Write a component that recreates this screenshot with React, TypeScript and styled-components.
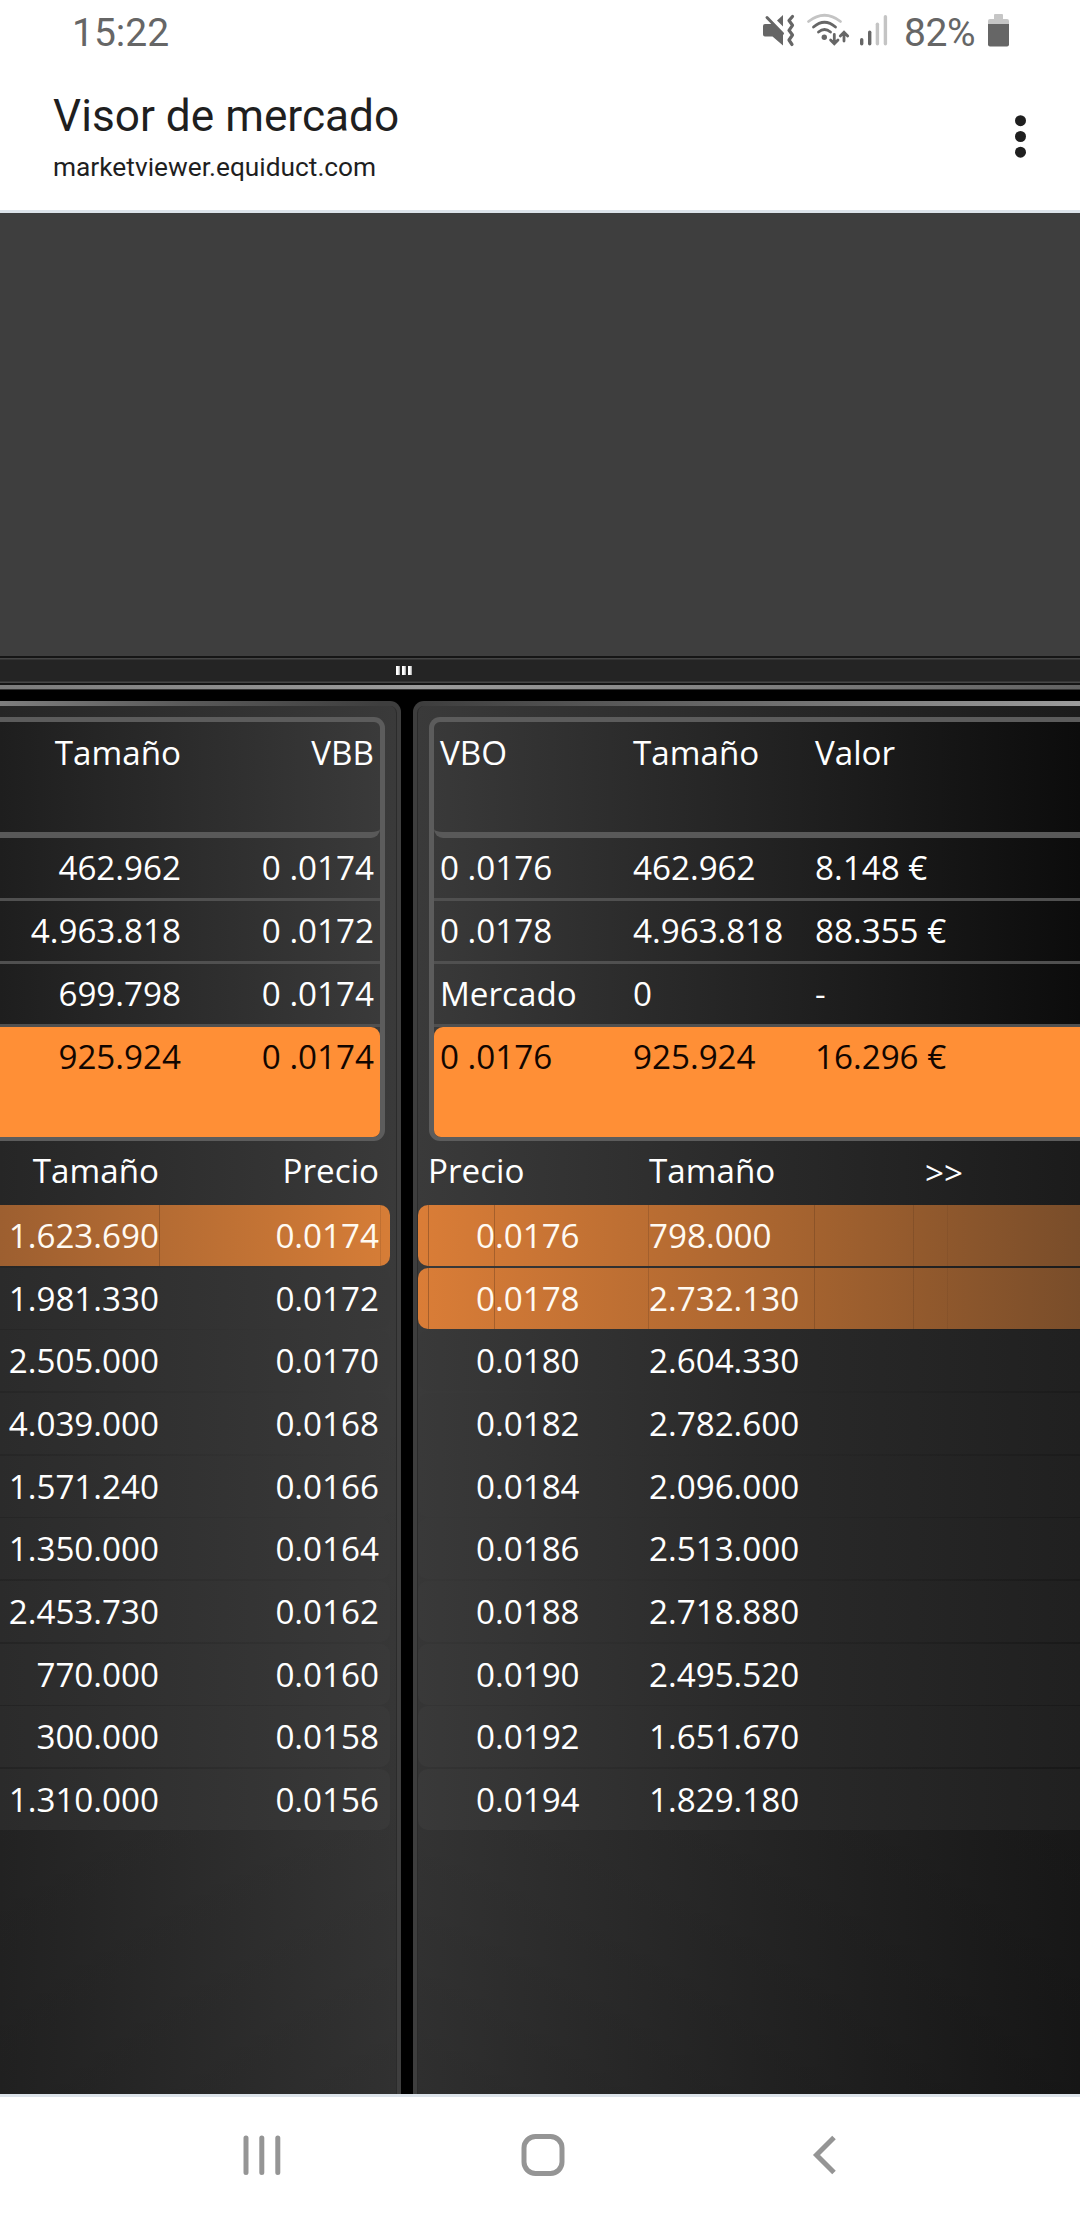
import {FC} from 'react'
import styled, {createGlobalStyle, css} from 'styled-components'

const GlobalStyle = createGlobalStyle`
  body {
    margin: 0;
    background: #fff;
  }
  * {
    box-sizing: border-box;
  }
`

type Side = 'bid' | 'ask'

const Screen = styled.div`
  width: 1080px;
  height: 2220px;
  display: flex;
  flex-direction: column;
  overflow: hidden;
  font-family: 'Open Sans', 'Noto Sans', sans-serif;
`

const StatusBar = styled.div`
  height: 64px;
  padding: 0 71px 0 72px;
  display: flex;
  justify-content: space-between;
  font-family: Roboto, sans-serif;
  font-size: 39px;
  line-height: 66px;
  color: #666;
`
const StatusIcons = styled.div`
  display: flex;
`
const BatteryLevel = styled.span`
  width: 84px;
  letter-spacing: -0.4px;
`

const TitleBar = styled.div`
  height: 149px;
  padding: 26px 52px 0 53px;
  display: flex;
  justify-content: space-between;
  border-bottom: 3px solid #dce3ea;
  font-family: Roboto, sans-serif;
  color: #1f1f1f;
`
const PageTitle = styled.div`
  font-size: 44.2px;
  line-height: 52px;
`
const PageHost = styled.div`
  font-size: 26.3px;
  line-height: 32px;
  margin-top: 9px;
`

const ChartArea = styled.div`
  height: 443px;
  background: #3e3e3e;
`
const Splitter = styled.div`
  height: 29px;
  padding-left: 396px;
  display: flex;
  align-items: center;
  gap: 2px;
  border-top: 2px solid #151515;
  border-bottom: 2px solid #151515;
  background: linear-gradient(#444 1px, #242424 2px, #242424 23px, #484848 24px, #484848);
`
const Grip = styled.i`
  width: 4px;
  height: 9px;
  margin-top: -1px;
  background: linear-gradient(90deg, #fff 50%, #999);
`
const SplitterEdge = styled.div`
  height: 5px;
  background: linear-gradient(90deg, #7c7c7c, #9c9c9c 420px, #858585 700px, #626262);
  border-bottom: 1px solid #333;
`

const Book = styled.div`
  flex: 1;
  min-height: 0;
  padding-top: 11px;
  display: flex;
  gap: 12px;
  background: #000;
`

// The frame is the gradient that shows round the panel body
const PanelFrame = styled.div<{ $side: Side }>`
  display: flex;
  ${p =>
    p.$side === 'bid'
      ? css`
          width: 401px;
          padding: 5px 4px 0 0;
          border-radius: 0 11px 0 0;
          background: linear-gradient(90deg, #7e7e7e, #5a5a5a 180px, #3e3e3e 380px);
        `
      : css`
          flex: 1;
          padding: 5px 0 0 4px;
          border-radius: 11px 0 0 0;
          background: linear-gradient(90deg, #3e3e3e 10px, #666 300px, #9b9b9b);
        `}
`
const PanelBody = styled.div<{ $side: Side }>`
  flex: 1;
  min-width: 0;
  padding-top: 11px;
  ${p =>
    p.$side === 'bid'
      ? css`
          border-right: 1px solid #2b2b2b;
          border-radius: 0 7px 0 0;
          background: linear-gradient(rgba(0, 0, 0, 0) 50%, rgba(0, 0, 0, 0.16)),
            linear-gradient(90deg, #262626, #3a3a3a);
        `
      : css`
          border-left: 1px solid #2b2b2b;
          border-radius: 7px 0 0 0;
          background: linear-gradient(rgba(0, 0, 0, 0) 50%, rgba(0, 0, 0, 0.2)),
            linear-gradient(90deg, #3a3a3a, #2a2a2a 50%, #1b1b1b);
        `}
`

const Summary = styled.div<{ $side: Side }>`
  height: 424px;
  border: 0 solid #5c5c5c;
  ${p =>
    p.$side === 'bid'
      ? css`
          width: 385px;
          border-width: 5px 5px 4px 0;
          border-radius: 0 11px 11px 0;
          background: linear-gradient(90deg, #1e1e1e, #3a3a3a);
        `
      : css`
          margin-left: 11px;
          border-width: 5px 0 4px 5px;
          border-radius: 11px 0 0 11px;
          background: linear-gradient(90deg, #393939, #232323 50%, #0c0c0c);
        `}
`
const summaryColumns = {
  bid: '187px 193px',
  ask: '193px 182px 1fr'
}
const SummaryLine = styled.div<{ $side: Side; $kind: 'head' | 'line' | 'total' }>`
  display: grid;
  grid-template-columns: ${p => summaryColumns[p.$side]};
  font-size: 33.2px;
  line-height: 60px;
  color: #fff;
  text-align: ${p => (p.$side === 'bid' ? 'right' : 'left')};
  ${p =>
    p.$kind === 'head' &&
    css`
      height: 116px;
      border-bottom: 6px solid #595959;
      border-radius: ${p.$side === 'bid' ? '0 0 9px 0' : '0 0 0 9px'};
      line-height: 62px;
    `}
  ${p =>
    p.$kind === 'line' &&
    css`
      height: 63px;
      border-bottom: 3px solid #505050;
    `}
  ${p =>
    p.$kind === 'total' &&
    css`
      height: 110px;
      border-radius: ${p.$side === 'bid' ? '0 9px 7px 0' : '9px 0 0 7px'};
      background: #ff8f36;
      color: #120600;
    `}
`
const SummaryCell = styled.span`
  padding: 0 6px 0 6px;
  white-space: pre;
`

const depthColumns = {
  bid: '160px 220px',
  ask: '231px 166px 1fr'
}
const DepthHead = styled.div<{ $side: Side }>`
  height: 64px;
  display: grid;
  grid-template-columns: ${p => depthColumns[p.$side]};
  font-size: 33.2px;
  line-height: 60px;
  color: #fff;
  text-align: ${p => (p.$side === 'bid' ? 'right' : 'left')};
`
const DepthHeadCell = styled.span<{ $indent?: number }>`
  padding: 0 1px 0 ${p => p.$indent || 0}px;
`
const DepthMore = styled.span`
  padding: 2px 0 0 110px;
`

// Thin seams where the highlighted cells meet
const seam = (x: number, alpha: number) =>
  `linear-gradient(rgba(70, 40, 20, ${alpha}), rgba(70, 40, 20, ${alpha})) ${x}px 0 / 1px 100% no-repeat`
const hotBackground = {
  bid: [seam(159, 0.3), seam(380, 0.15), 'linear-gradient(90deg, #9d5f30, #d67d37)'].join(', '),
  ask: [
    seam(10, 0.35),
    seam(76, 0.3),
    seam(230, 0.2),
    seam(396, 0.25),
    seam(495, 0.2),
    seam(529, 0.1),
    'linear-gradient(90deg, #da7d37, #a3622f 60%, #794d2a)'
  ].join(', ')
}
const DepthRow = styled.div<{ $side: Side; $hot?: boolean }>`
  height: 61px;
  margin-bottom: 1.67px;
  display: grid;
  grid-template-columns: ${p => depthColumns[p.$side]};
  font-size: 33.2px;
  line-height: 61.5px;
  color: ${p => (p.$hot ? '#fffaf2' : '#fff')};
  text-align: ${p => (p.$side === 'bid' ? 'right' : 'left')};
  ${p =>
    p.$side === 'bid'
      ? css`
          width: 390px;
          border-radius: 0 10px 10px 0;
          background: ${p.$hot ? hotBackground.bid : 'linear-gradient(90deg, #2b2b2b, #393939)'};
        `
      : css`
          border-radius: 10px 0 0 10px;
          background: ${p.$hot ? hotBackground.ask : 'linear-gradient(90deg, #393939, #2a2a2a 50%, #202020)'};
        `}
`
const DepthCell = styled.span<{ $indent?: number }>`
  padding: 0 1px 0 ${p => p.$indent || 0}px;
`

const NavBar = styled.div`
  height: 126px;
  border-top: 3px solid #dce3ea;
  background: #fff;
`

const StatusGlyphs: FC = () => (
  <svg width="144" height="64" viewBox="760 0 144 64" fill="#666">
    <path d="M765 24h8l10 9.500V45.500L772.500 36.500H765a2 2 0 0 1-2-2V26a2 2 0 0 1 2-2z" />
    <path d="M783 15v11.500l-6-6z" />
    <path d="M767 17.500l15.500 16" stroke="#666" strokeWidth="3" strokeLinecap="round" />
    <path
      d="M792.500 16.500l-3.500 4 3.500 4.800-3.500 5 3.500 4.700-3.500 5 3 4.500"
      fill="none"
      stroke="#666"
      strokeWidth="3.200"
      strokeLinejoin="round"
      strokeLinecap="round"
    />
    <g fill="none" strokeWidth="2.800" strokeLinecap="round">
      <path d="M808.500 21.500q16-12.500 32 0" stroke="#c4c4c4" />
      <path d="M813.500 27q11-9.500 22 0" stroke="#666" />
      <path d="M818.500 32q6-5 12 0" stroke="#666" />
    </g>
    <circle cx="824.300" cy="37.300" r="2.700" />
    <path
      d="M834.300 34.500v9m-3.700-3.500l3.700 3.800 3.700-3.800M844 41V32.500m-3.700 3.500l3.700-3.800 3.700 3.800"
      fill="none"
      stroke="#666"
      strokeWidth="2.800"
      strokeLinecap="round"
    />
    <rect x="860" y="38" width="3.400" height="7.500" rx="1.700" />
    <rect x="868" y="30.500" width="3.400" height="15" rx="1.700" />
    <rect x="875.700" y="22.500" width="3.400" height="23" rx="1.700" fill="#c4c4c4" />
    <rect x="883.700" y="15" width="3.400" height="30.500" rx="1.700" fill="#c4c4c4" />
  </svg>
)

const BatteryGlyph: FC = () => (
  <svg width="21" height="64" viewBox="0 0 21 64">
    <path d="M7 14h7a1 1 0 0 1 1 1v4h4a2 2 0 0 1 2 2v3H0v-3a2 2 0 0 1 2-2h4v-4a1 1 0 0 1 1-1z" fill="#c6c6c6" />
    <path d="M0 24h21v20.500a2 2 0 0 1-2 2H2a2 2 0 0 1-2-2z" fill="#666" />
  </svg>
)

const MoreGlyph: FC = () => (
  <svg width="15" height="90" viewBox="0 0 15 90" fill="#1f1f1f">
    <circle cx="7.500" cy="30.700" r="5.500" />
    <circle cx="7.500" cy="46.500" r="5.500" />
    <circle cx="7.500" cy="62.200" r="5.500" />
  </svg>
)

const NavGlyphs: FC = () => (
  <svg width="1080" height="123" viewBox="0 2097 1080 123" fill="none" stroke="#959595" strokeWidth="5" strokeLinecap="round">
    <path d="M246 2138v34.500M261.800 2138v34.500M277.800 2138v34.500" />
    <rect x="524" y="2136.500" width="38" height="37" rx="11.500" />
    <path d="M834 2137.500l-17.500 17.500 17.500 17.500" strokeLinecap="butt" />
  </svg>
)

const summaries: Record<Side, string[][]> = {
  bid: [
    ['Tamaño', 'VBB'],
    ['462.962', '0 .0174'],
    ['4.963.818', '0 .0172'],
    ['699.798', '0 .0174'],
    ['925.924', '0 .0174']
  ],
  ask: [
    ['VBO', 'Tamaño', 'Valor'],
    ['0 .0176', '462.962', '8.148 €'],
    ['0 .0178', '4.963.818', '88.355 €'],
    ['Mercado', '0', '-'],
    ['0 .0176', '925.924', '16.296 €']
  ]
}

const bids = [
  ['1.623.690', '0.0174'],
  ['1.981.330', '0.0172'],
  ['2.505.000', '0.0170'],
  ['4.039.000', '0.0168'],
  ['1.571.240', '0.0166'],
  ['1.350.000', '0.0164'],
  ['2.453.730', '0.0162'],
  ['770.000', '0.0160'],
  ['300.000', '0.0158'],
  ['1.310.000', '0.0156']
]
const asks = [
  ['0.0176', '798.000'],
  ['0.0178', '2.732.130'],
  ['0.0180', '2.604.330'],
  ['0.0182', '2.782.600'],
  ['0.0184', '2.096.000'],
  ['0.0186', '2.513.000'],
  ['0.0188', '2.718.880'],
  ['0.0190', '2.495.520'],
  ['0.0192', '1.651.670'],
  ['0.0194', '1.829.180']
]

const lineKind = (i: number, last: number) => (i === 0 ? 'head' : i === last ? 'total' : 'line')

const SummaryTable: FC<{ side: Side }> = ({ side }) => {
  const rows = summaries[side]
  return (
    <Summary $side={side}>
      {rows.map((cells, i) => (
        <SummaryLine key={i} $side={side} $kind={lineKind(i, rows.length - 1)}>
          {cells.map((text, j) => (
            <SummaryCell key={j}>{text}</SummaryCell>
          ))}
        </SummaryLine>
      ))}
    </Summary>
  )
}

export default function App() {
  return (
    <Screen>
      <GlobalStyle />
      <StatusBar>
        <span>15:22</span>
        <StatusIcons>
          <StatusGlyphs />
          <BatteryLevel>82%</BatteryLevel>
          <BatteryGlyph />
        </StatusIcons>
      </StatusBar>
      <TitleBar>
        <div>
          <PageTitle>Visor de mercado</PageTitle>
          <PageHost>marketviewer.equiduct.com</PageHost>
        </div>
        <MoreGlyph />
      </TitleBar>
      <ChartArea />
      <Splitter>
        <Grip />
        <Grip />
        <Grip />
      </Splitter>
      <SplitterEdge />
      <Book>
        <PanelFrame $side="bid">
          <PanelBody $side="bid">
            <SummaryTable side="bid" />
            <DepthHead $side="bid">
              <DepthHeadCell>Tamaño</DepthHeadCell>
              <DepthHeadCell>Precio</DepthHeadCell>
            </DepthHead>
            {bids.map(([size, price], i) => (
              <DepthRow key={price} $side="bid" $hot={i === 0}>
                <DepthCell>{size}</DepthCell>
                <DepthCell>{price}</DepthCell>
              </DepthRow>
            ))}
          </PanelBody>
        </PanelFrame>
        <PanelFrame $side="ask">
          <PanelBody $side="ask">
            <SummaryTable side="ask" />
            <DepthHead $side="ask">
              <DepthHeadCell $indent={10}>Precio</DepthHeadCell>
              <DepthHeadCell>Tamaño</DepthHeadCell>
              <DepthMore>&gt;&gt;</DepthMore>
            </DepthHead>
            {asks.map(([price, size], i) => (
              <DepthRow key={price} $side="ask" $hot={i < 2}>
                <DepthCell $indent={58}>{price}</DepthCell>
                <DepthCell>{size}</DepthCell>
              </DepthRow>
            ))}
          </PanelBody>
        </PanelFrame>
      </Book>
      <NavBar>
        <NavGlyphs />
      </NavBar>
    </Screen>
  )
}
